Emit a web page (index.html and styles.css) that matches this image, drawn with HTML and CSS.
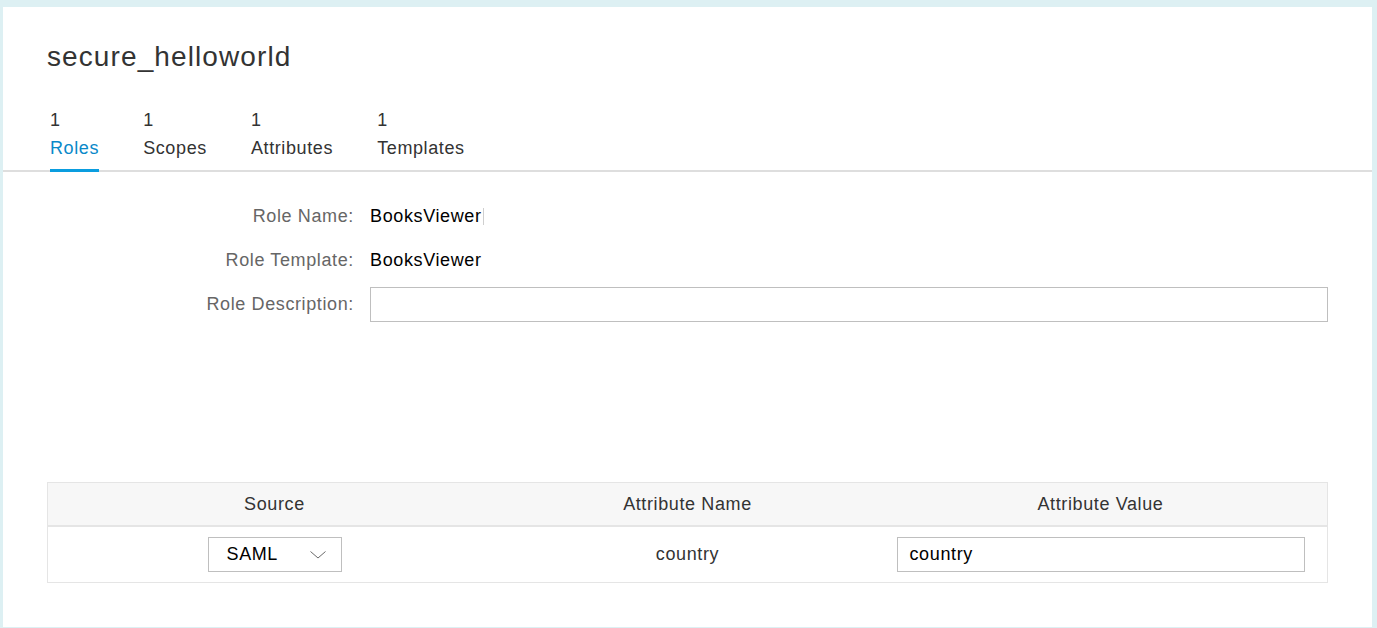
FILE: index.html
```html
<!DOCTYPE html>
<html lang="en">
<head>
<meta charset="utf-8">
<title>secure_helloworld</title>
<link rel="stylesheet" href="styles.css">
</head>
<body>
<div class="panel">
  <header class="head">
    <h1 class="title">secure_helloworld</h1>
    <nav class="tabs">
      <div class="tab active"><span class="count">1</span><span class="name">Roles</span></div>
      <div class="tab"><span class="count">1</span><span class="name">Scopes</span></div>
      <div class="tab"><span class="count">1</span><span class="name">Attributes</span></div>
      <div class="tab"><span class="count">1</span><span class="name">Templates</span></div>
    </nav>
  </header>

  <section class="form">
    <div class="label">Role Name:</div>
    <div class="value">BooksViewer<span class="caret"></span></div>
    <div class="label">Role Template:</div>
    <div class="value">BooksViewer</div>
    <div class="label">Role Description:</div>
    <div class="value"><div class="input"></div></div>
  </section>

  <section class="attrs">
    <div class="table">
      <div class="thead">
        <div class="th">Source</div>
        <div class="th">Attribute Name</div>
        <div class="th">Attribute Value</div>
      </div>
      <div class="tr">
        <div class="td">
          <div class="select">
            <span>SAML</span>
            <svg class="chev" width="16" height="8" viewBox="0 0 16 8"><polyline points="0.5,0.5 8,7 15.5,0.5" fill="none" stroke="#6a6a6a" stroke-width="1"/></svg>
          </div>
        </div>
        <div class="td name-cell">country</div>
        <div class="td">
          <div class="text-input">country</div>
        </div>
      </div>
    </div>
  </section>
</div>
</body>
</html>
```

FILE: styles.css
```css
* { box-sizing: border-box; }

html, body { height: 100%; }

body {
  margin: 0;
  height: 628px;
  overflow: hidden;
  background: #ddf0f3;
  padding: 7px 5px 0 3px;
  font-family: "Liberation Sans", Arial, sans-serif;
  font-size: 18px;
  letter-spacing: 0.62px;
  color: #333;
}

.panel {
  background: #fff;
  height: 620px;
}

.head {
  padding-top: 33px;
}

.title {
  margin: 0 0 0 44px;
  font-size: 28px;
  font-weight: normal;
  line-height: 34px;
  letter-spacing: 1.1px;
  color: #333;
}

.tabs {
  display: flex;
  gap: 44px;
  margin-top: 32px;
  padding-left: 47px;
  border-bottom: 2px solid #dedede;
}

.tab {
  position: relative;
  display: flex;
  flex-direction: column;
  line-height: 28px;
  padding-bottom: 8px;
  color: #333;
}

.tab.active .name { color: #0a89c9; }

.tab.active::after {
  content: "";
  position: absolute;
  left: 0;
  right: 0;
  bottom: -2px;
  height: 3px;
  background: #0a9ddf;
}

.form {
  display: grid;
  grid-template-columns: 307px 1fr;
  column-gap: 16px;
  grid-auto-rows: 44px;
  align-items: center;
  padding: 22px 44px 0 44px;
}

.label {
  text-align: right;
  color: #666;
}

.value {
  color: #000;
  display: flex;
  align-items: center;
}

.caret {
  display: inline-block;
  width: 1px;
  height: 17px;
  margin-left: 1px;
  background: #cfcfcf;
}

.input {
  width: 100%;
  height: 35px;
  border: 1px solid #bfbfbf;
  background: #fff;
}

.attrs {
  padding: 156px 44px 0 44px;
}

.table {
  border: 1px solid #e5e5e5;
}

.thead,
.tr {
  display: grid;
  grid-template-columns: repeat(3, 1fr);
  padding: 0 20px;
  align-items: center;
}

.thead {
  height: 44px;
  background: #f7f7f7;
  border-bottom: 2px solid #e5e5e5;
}

.th {
  text-align: center;
  color: #333;
}

.tr {
  height: 55px;
}

.td {
  display: flex;
  justify-content: center;
  align-items: center;
}

.name-cell { color: #333; }

.select {
  width: 134px;
  height: 35px;
  border: 1px solid #bfbfbf;
  display: flex;
  align-items: center;
  justify-content: space-between;
  padding: 0 15px 0 18px;
  color: #000;
}

.chev { display: block; margin-top: 1px; }

.text-input {
  width: 408px;
  height: 35px;
  border: 1px solid #bfbfbf;
  display: flex;
  align-items: center;
  padding-left: 12px;
  color: #000;
}
```
